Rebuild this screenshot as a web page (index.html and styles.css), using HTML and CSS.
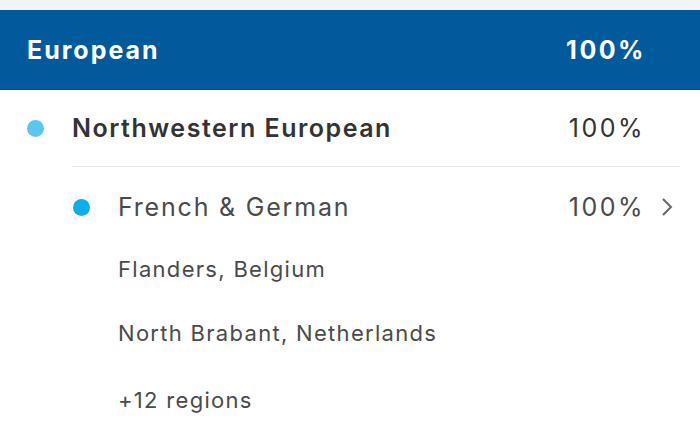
FILE: index.html
```html
<!DOCTYPE html>
<html>
<head>
<meta charset="utf-8">
<link rel="stylesheet" href="styles.css">
</head>
<body>
<div class="strip"></div>
<div class="header">
  <span class="header-name">European</span>
  <span class="header-pct">100%</span>
</div>
<div class="region">
  <span class="dot dot-light"></span>
  <div class="region-body">
    <span class="region-name">Northwestern European</span>
    <span class="region-pct">100%</span>
  </div>
</div>
<div class="sub">
  <span class="dot dot-bright"></span>
  <div class="sub-body">
    <span class="sub-name">French &amp; German</span>
    <span class="sub-pct">100%</span>
    <svg class="chev" width="16" height="22" viewBox="0 0 16 22"><polyline points="4,3 12,11 4,19" fill="none" stroke="#666" stroke-width="2"/></svg>
  </div>
</div>
<ul class="places">
  <li>Flanders, Belgium</li>
  <li>North Brabant, Netherlands</li>
  <li class="more">+12 regions</li>
</ul>
</body>
</html>
```

FILE: styles.css
```css
html, body {
  margin: 0;
  padding: 0;
  background: #ffffff;
  font-family: Inter, "Open Sans", sans-serif;
}
.strip {
  height: 10px;
  background: #f3f5f5;
}
.header {
  height: 80px;
  background: #005a9b;
  display: flex;
  align-items: center;
  justify-content: space-between;
  padding: 0 54px 0 27px;
  color: #ffffff;
  font-weight: 700;
  font-size: 25px;
}
.header-name { letter-spacing: 2px; }
.header-pct { letter-spacing: 2.5px; }
.region {
  display: flex;
  align-items: stretch;
  padding-left: 27px;
}
.dot {
  width: 17px;
  height: 17px;
  border-radius: 50%;
  flex: none;
  align-self: center;
}
.dot-light { background: #5bc6ee; }
.dot-bright { background: #0aaee8; }
.region .dot { margin-right: 28px; margin-top: -1px; }
.region-body {
  flex: 1;
  height: 76px;
  margin-right: 20px;
  border-bottom: 1.5px solid #e4e6e6;
  display: flex;
  align-items: center;
  justify-content: space-between;
  padding-right: 35px;
  font-size: 25px;
  color: #333;
}
.region-name { font-weight: 600; letter-spacing: 1.5px; }
.region-pct { font-weight: 400; letter-spacing: 2.5px; }
.sub {
  display: flex;
  align-items: center;
  height: 80px;
  padding-left: 73px;
}
.sub .dot { margin-right: 28px; }
.sub-body {
  flex: 1;
  display: flex;
  align-items: center;
  margin-right: 25px;
  font-size: 25px;
  color: #4a4a4a;
}
.sub-name { flex: 1; letter-spacing: 1.8px; }
.sub-pct { letter-spacing: 2.5px; }
.chev { margin-left: 14px; }
.places {
  list-style: none;
  margin: 0;
  padding: 0 0 0 118px;
  display: flex;
  flex-direction: column;
  gap: 20px;
  font-size: 22px;
  letter-spacing: 1.3px;
  color: #4a4a4a;
}
.places li {
  height: 44px;
  line-height: 44px;
}
.places .more { margin-top: 3px; }
```
